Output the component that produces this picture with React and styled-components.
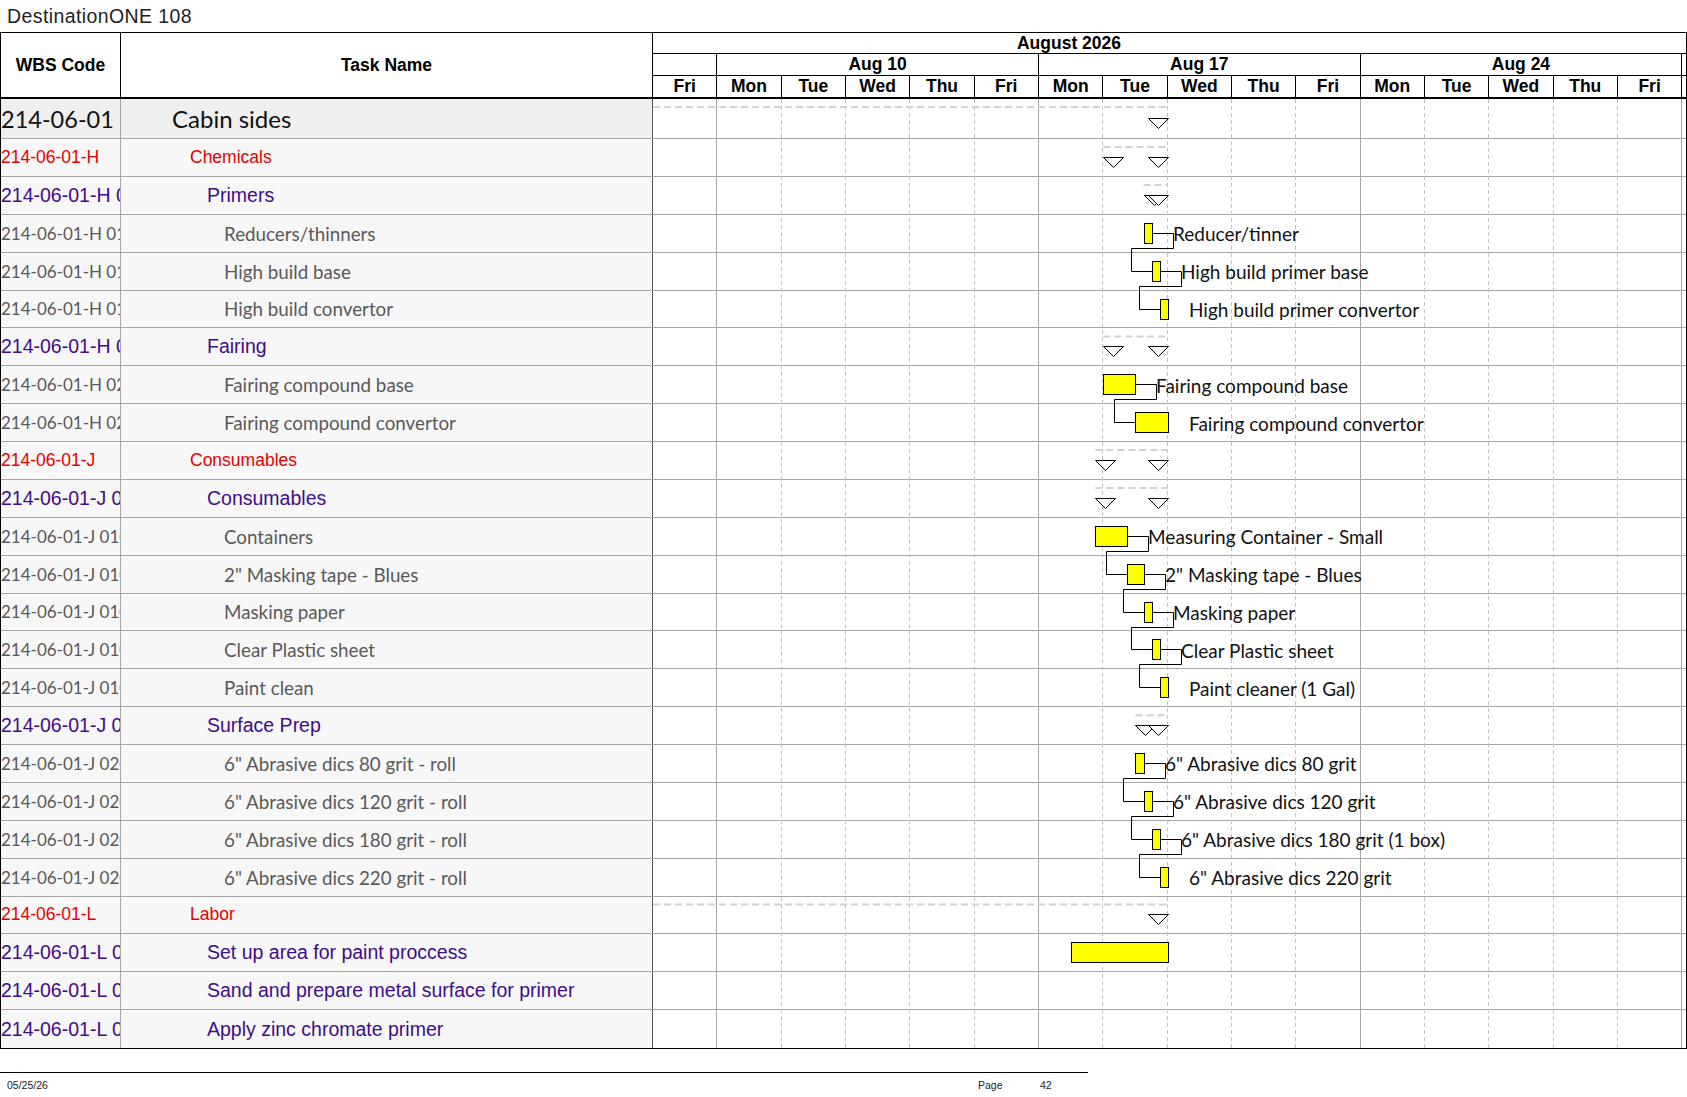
import React from 'react';
import styled, { createGlobalStyle, css } from 'styled-components';

const GlobalStyle = createGlobalStyle`
  html, body {
    margin: 0;
    padding: 0;
    background: #ffffff;
  }
  body {
    font-family: "Liberation Sans", Arial, sans-serif;
    color: #000;
  }
`;

// timescale geometry
const DAY_W = 64.33;
const HOUR = DAY_W / 8;
const FIRST_ROW_H = 40;
const ROW_H = 37.875;
const GANTT_W = 1033;
const MON = 6;
const TUE = 7;

const at = (day, hour = 0) => day * DAY_W + hour * HOUR;
const rowTop = (i) => (i === 0 ? 0 : FIRST_ROW_H + (i - 1) * ROW_H);
const rowH = (i) => (i === 0 ? FIRST_ROW_H : ROW_H);

const ROWS = [
  { level: 0, wbs: '214-06-01', name: 'Cabin sides', gantt: { kind: 'summary', to: at(TUE, 8) } },
  { level: 1, wbs: '214-06-01-H', name: 'Chemicals', gantt: { kind: 'summary', from: at(TUE, 0), to: at(TUE, 8) } },
  { level: 2, wbs: '214-06-01-H 01', name: 'Primers', gantt: { kind: 'summary', from: at(TUE, 5), to: at(TUE, 8) } },
  { level: 3, wbs: '214-06-01-H 0101', name: 'Reducers/thinners', gantt: { kind: 'task', from: at(TUE, 5), to: at(TUE, 6), label: 'Reducer/tinner', linked: true } },
  { level: 3, wbs: '214-06-01-H 0102', name: 'High build base', gantt: { kind: 'task', from: at(TUE, 6), to: at(TUE, 7), label: 'High build primer base', linked: true } },
  { level: 3, wbs: '214-06-01-H 0103', name: 'High build convertor', gantt: { kind: 'task', from: at(TUE, 7), to: at(TUE, 8), label: 'High build primer convertor' } },
  { level: 2, wbs: '214-06-01-H 02', name: 'Fairing', gantt: { kind: 'summary', from: at(TUE, 0), to: at(TUE, 8) } },
  { level: 3, wbs: '214-06-01-H 0201', name: 'Fairing compound base', gantt: { kind: 'task', from: at(TUE, 0), to: at(TUE, 4), label: 'Fairing compound base', linked: true } },
  { level: 3, wbs: '214-06-01-H 0202', name: 'Fairing compound convertor', gantt: { kind: 'task', from: at(TUE, 4), to: at(TUE, 8), label: 'Fairing compound convertor' } },
  { level: 1, wbs: '214-06-01-J', name: 'Consumables', gantt: { kind: 'summary', from: at(MON, 7), to: at(TUE, 8) } },
  { level: 2, wbs: '214-06-01-J 01', name: 'Consumables', gantt: { kind: 'summary', from: at(MON, 7), to: at(TUE, 8) } },
  { level: 3, wbs: '214-06-01-J 0101', name: 'Containers', gantt: { kind: 'task', from: at(MON, 7), to: at(TUE, 3), label: 'Measuring Container - Small', linked: true } },
  { level: 3, wbs: '214-06-01-J 0102', name: '2" Masking tape - Blues', gantt: { kind: 'task', from: at(TUE, 3), to: at(TUE, 5), label: '2" Masking tape - Blues', linked: true } },
  { level: 3, wbs: '214-06-01-J 0103', name: 'Masking paper', gantt: { kind: 'task', from: at(TUE, 5), to: at(TUE, 6), label: 'Masking paper', linked: true } },
  { level: 3, wbs: '214-06-01-J 0104', name: 'Clear Plastic sheet', gantt: { kind: 'task', from: at(TUE, 6), to: at(TUE, 7), label: 'Clear Plastic sheet', linked: true } },
  { level: 3, wbs: '214-06-01-J 0105', name: 'Paint clean', gantt: { kind: 'task', from: at(TUE, 7), to: at(TUE, 8), label: 'Paint cleaner (1 Gal)' } },
  { level: 2, wbs: '214-06-01-J 02', name: 'Surface Prep', gantt: { kind: 'summary', from: at(TUE, 4), to: at(TUE, 8) } },
  { level: 3, wbs: '214-06-01-J 0201', name: '6" Abrasive dics 80 grit - roll', gantt: { kind: 'task', from: at(TUE, 4), to: at(TUE, 5), label: '6" Abrasive dics 80 grit', linked: true } },
  { level: 3, wbs: '214-06-01-J 0202', name: '6" Abrasive dics 120 grit - roll', gantt: { kind: 'task', from: at(TUE, 5), to: at(TUE, 6), label: '6" Abrasive dics 120 grit', linked: true } },
  { level: 3, wbs: '214-06-01-J 0203', name: '6" Abrasive dics 180 grit - roll', gantt: { kind: 'task', from: at(TUE, 6), to: at(TUE, 7), label: '6" Abrasive dics 180 grit (1 box)', linked: true } },
  { level: 3, wbs: '214-06-01-J 0204', name: '6" Abrasive dics 220 grit - roll', gantt: { kind: 'task', from: at(TUE, 7), to: at(TUE, 8), label: '6" Abrasive dics 220 grit' } },
  { level: 1, wbs: '214-06-01-L', name: 'Labor', gantt: { kind: 'summary', to: at(TUE, 8) } },
  { level: 2, wbs: '214-06-01-L 01', name: 'Set up area for paint proccess', gantt: { kind: 'task', from: at(MON, 4), to: at(TUE, 8) } },
  { level: 2, wbs: '214-06-01-L 02', name: 'Sand and prepare metal surface for primer' },
  { level: 2, wbs: '214-06-01-L 03', name: 'Apply zinc chromate primer' },
];

const WEEKS = [
  { days: 1, label: '' },
  { days: 5, label: 'Aug 10' },
  { days: 5, label: 'Aug 17' },
  { days: 5, label: 'Aug 24' },
];
const DAYS = ['Fri', 'Mon', 'Tue', 'Wed', 'Thu', 'Fri', 'Mon', 'Tue', 'Wed', 'Thu', 'Fri', 'Mon', 'Tue', 'Wed', 'Thu', 'Fri'];

// text style per outline level (summary, group, sub-group, item)
const nameText = {
  0: css`
    font-family: Lato, "Liberation Sans", sans-serif;
    font-size: 24px;
    color: #111;
  `,
  1: css`
    font-family: "Liberation Sans", Arial, sans-serif;
    font-size: 17.5px;
    color: #e60000;
  `,
  2: css`
    font-family: "Liberation Sans", Arial, sans-serif;
    font-size: 19.5px;
    color: #3f0c8a;
  `,
  3: css`
    font-family: Lato, "Liberation Sans", sans-serif;
    font-size: 18.8px;
    color: #595959;
  `,
};
const wbsSize = { 0: 23.5, 1: 17.5, 2: 19.5, 3: 17 };
const indent = { 0: 51, 1: 69, 2: 86, 3: 103 };

const Page = styled.div`
  width: 1687px;
`;

const TitleBar = styled.div`
  height: 32px;
  display: flex;
  align-items: center;
  padding-left: 7px;
  font-size: 19.5px;
  letter-spacing: 0.4px;
  color: #222;
`;

const Sheet = styled.div`
  border: 1px solid #000;
`;

const Header = styled.div`
  display: grid;
  grid-template-columns: 120px 532px ${GANTT_W}px;
  height: 66px;
`;

const HeadCell = styled.div`
  display: flex;
  align-items: center;
  justify-content: center;
  border-right: 1px solid #000;
  border-bottom: 2px solid #000;
  font-weight: bold;
  font-size: 17.5px;
`;

const Timescale = styled.div`
  display: flex;
  flex-direction: column;
`;

const ScaleRow = styled.div`
  display: flex;
  box-sizing: border-box;
  height: ${(p) => p.$h}px;
  border-bottom: ${(p) => p.$line}px solid #000;
  font-weight: bold;
  font-size: 17.5px;
`;

const MonthLabel = styled.div`
  flex: 1;
  display: flex;
  align-items: center;
  justify-content: center;
  padding-right: 201px;
`;

const TimeCell = styled.div`
  flex: 0 0 auto;
  box-sizing: border-box;
  width: ${(p) => p.$days * DAY_W}px;
  border-right: 1px solid #000;
  display: flex;
  align-items: center;
  justify-content: center;
`;

const Filler = styled.div`
  flex: 1;
`;

const Body = styled.div`
  display: flex;
`;

const LeftPane = styled.div`
  width: 652px;
  display: flex;
  flex-direction: column;
`;

const Row = styled.div`
  display: grid;
  grid-template-columns: 120px 532px;
  box-sizing: border-box;
  height: ${(p) => p.$h}px;
  border-bottom: 1px solid #a6a6a6;
  background: ${(p) => (p.$top ? '#efefef' : '#f7f7f7')};

  &:last-child {
    border-bottom: none;
  }
`;

const WbsCell = styled.div`
  display: flex;
  align-items: center;
  overflow: hidden;
  white-space: nowrap;
  border-right: 1px solid #a6a6a6;
  ${(p) => nameText[p.$level]}
  font-size: ${(p) => wbsSize[p.$level]}px;
`;

const NameCell = styled.div`
  display: flex;
  align-items: center;
  overflow: hidden;
  white-space: nowrap;
  padding-left: ${(p) => indent[p.$level]}px;
  border-right: 1px solid #555;
  ${(p) => nameText[p.$level]}
`;

const GanttPane = styled.div`
  position: relative;
  width: ${GANTT_W}px;
  display: flex;
  flex-direction: column;
  background: #fff;
`;

const ChartSvg = styled.svg`
  position: absolute;
  left: 0;
  top: 0;
  z-index: 1;
  overflow: visible;
`;

const GanttRow = styled.div`
  position: relative;
  box-sizing: border-box;
  height: ${(p) => p.$h}px;
  border-bottom: 1px solid #a6a6a6;

  &:last-child {
    border-bottom: none;
  }
`;

const TaskLabel = styled.span`
  position: absolute;
  top: 1px;
  bottom: 0;
  z-index: 2;
  display: flex;
  align-items: center;
  white-space: nowrap;
  font-family: Lato, "Liberation Sans", sans-serif;
  font-size: 19px;
  color: #111;
`;

const Footer = styled.div`
  margin-top: 23px;
  width: 1088px;
  height: 24px;
  border-top: 1px solid #000;
  display: grid;
  grid-template-columns: 978px 62px auto;
  align-items: center;
  font-size: 10.5px;
  color: #222;
`;

const FooterDate = styled.span`
  padding-left: 7px;
`;

function Chart() {
  const height = rowTop(ROWS.length);
  const parts = [];

  for (let k = 1; k <= 16; k++) {
    const x = Math.round(k * DAY_W) - 0.5;
    const week = (k - 1) % 5 === 0;
    parts.push(
      <line
        key={`grid-${k}`}
        x1={x}
        x2={x}
        y1={0}
        y2={height}
        stroke={week ? '#a6a6a6' : '#c4c4c4'}
        strokeDasharray={week ? undefined : '4 3'}
      />
    );
  }

  ROWS.forEach((row, i) => {
    const g = row.gantt;
    if (!g) return;
    const top = rowTop(i);
    if (g.kind === 'summary') {
      const from = g.from ?? 0;
      const ty = Math.round(top + rowH(i) / 2 - 1) + 0.5;
      parts.push(
        <line key={`dash-${i}`} x1={from} x2={g.to} y1={top + 8} y2={top + 8} stroke="#d2d2d2" strokeWidth="2" strokeDasharray="7 4" />
      );
      const tris = g.from != null ? [Math.round(g.from), Math.round(g.to) - 20] : [Math.round(g.to) - 20];
      tris.forEach((x, n) => {
        parts.push(
          <polygon
            key={`tri-${i}-${n}`}
            points={`${x + 0.5},${ty} ${x + 20.5},${ty} ${x + 10.5},${ty + 10}`}
            fill="#fff"
            stroke="#000"
          />
        );
      });
      return;
    }
    const x1 = Math.round(g.from);
    const x2 = Math.round(g.to);
    if (g.linked) {
      const next = ROWS[i + 1].gantt;
      const nTop = rowTop(i + 1);
      const nx = Math.round(next.from);
      const bx = x2 + 21;
      const ly = Math.round(top + 33) + 0.5;
      const my = Math.round(top + 18) + 0.5;
      const nmy = Math.round(nTop + 18) + 0.5;
      parts.push(
        <path
          key={`link-${i}`}
          d={`M${x2} ${my} H${bx + 0.5} V${ly} H${nx - 20.5} V${nmy} H${nx}`}
          fill="none"
          stroke="#000"
        />
      );
    }
    parts.push(
      <rect
        key={`bar-${i}`}
        x={x1 + 0.5}
        y={Math.round(top + 8) + 0.5}
        width={x2 - x1}
        height={20}
        fill="#ffff00"
        stroke="#000"
      />
    );
  });

  return (
    <ChartSvg width={GANTT_W} height={height}>
      {parts}
    </ChartSvg>
  );
}

export default function App() {
  return (
    <Page>
      <GlobalStyle />
      <TitleBar>DestinationONE 108</TitleBar>
      <Sheet>
        <Header>
          <HeadCell>WBS Code</HeadCell>
          <HeadCell>Task Name</HeadCell>
          <Timescale>
            <ScaleRow $h={21} $line={1}>
              <MonthLabel>August 2026</MonthLabel>
            </ScaleRow>
            <ScaleRow $h={22} $line={1}>
              {WEEKS.map((w, i) => (
                <TimeCell key={i} $days={w.days}>{w.label}</TimeCell>
              ))}
              <Filler />
            </ScaleRow>
            <ScaleRow $h={23} $line={2}>
              {DAYS.map((d, i) => (
                <TimeCell key={i} $days={1}>{d}</TimeCell>
              ))}
              <Filler />
            </ScaleRow>
          </Timescale>
        </Header>
        <Body>
          <LeftPane>
            {ROWS.map((row, i) => (
              <Row key={i} $h={rowH(i)} $top={i === 0}>
                <WbsCell $level={row.level}>{row.wbs}</WbsCell>
                <NameCell $level={row.level}>{row.name}</NameCell>
              </Row>
            ))}
          </LeftPane>
          <GanttPane>
            <Chart />
            {ROWS.map((row, i) => (
              <GanttRow key={i} $h={rowH(i)}>
                {row.gantt && row.gantt.label && (
                  <TaskLabel style={{ left: Math.round(row.gantt.to) + 21 }}>{row.gantt.label}</TaskLabel>
                )}
              </GanttRow>
            ))}
          </GanttPane>
        </Body>
      </Sheet>
      <Footer>
        <FooterDate>05/25/26</FooterDate>
        <span>Page</span>
        <span>42</span>
      </Footer>
    </Page>
  );
}
